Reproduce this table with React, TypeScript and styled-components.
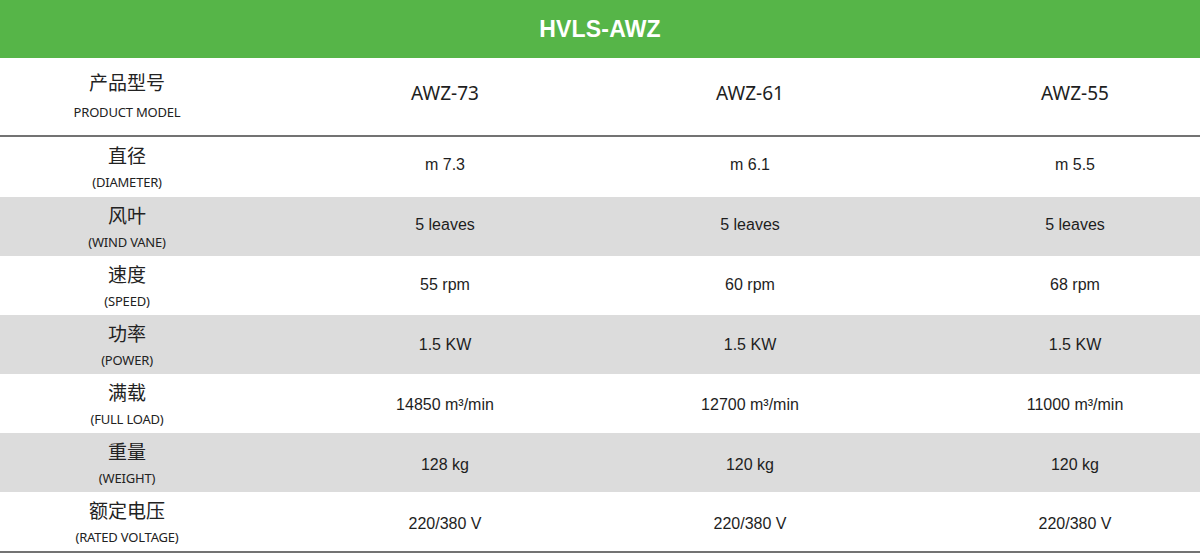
import React from "react";
import styled, { createGlobalStyle } from "styled-components";

const Global = createGlobalStyle`
  html, body { margin: 0; padding: 0; background: #fff; }
  body { width: 1200px; height: 553px; overflow: hidden; }
`;

const Wrap = styled.div`
  width: 1200px;
  display: flex;
  flex-direction: column;
`;

const Title = styled.div`
  height: 58px;
  background: #56b548;
  display: flex;
  align-items: center;
  justify-content: center;
  color: #fff;
  font-family: "Liberation Sans", Arial, sans-serif;
  font-weight: bold;
  font-size: 23px;
  letter-spacing: 0.2px;
`;

const Row = styled.div<{ $alt?: boolean; $h: number; $border?: boolean }>`
  display: grid;
  grid-template-columns: 254px 382px 228px 336px;
  height: ${(p) => p.$h}px;
  background: ${(p) => (p.$alt ? "#dcdcdc" : "#fff")};
  border-bottom: ${(p) => (p.$border ? "2px solid #737373" : "none")};
  box-sizing: content-box;
`;

const Label = styled.div<{ $top: number; $gap: number }>`
  display: flex;
  flex-direction: column;
  align-items: center;
  padding-top: ${(p) => p.$top}px;
  gap: ${(p) => p.$gap}px;
`;

const Zh = styled.div`
  font-family: "Noto Sans CJK SC", "Noto Sans", sans-serif;
  font-size: 19px;
  line-height: 24px;
  color: #222;
`;

const En = styled.div`
  font-family: "Noto Sans", "Liberation Sans", sans-serif;
  font-size: 13px;
  line-height: 15px;
  color: #222;
  letter-spacing: -0.2px;
`;

const Value = styled.div<{ $shift?: number; $model?: boolean; $nudge?: number }>`
  display: flex;
  align-items: center;
  justify-content: center;
  padding-left: ${(p) => p.$shift ?? 0}px;
  padding-top: ${(p) => (p.$nudge ?? 0) * 2}px;
  padding-bottom: ${(p) => (p.$model ? 8 : 4)}px;
  font-family: ${(p) =>
    p.$model ? '"Noto Sans", "Liberation Sans", sans-serif' : '"Liberation Sans", Arial, sans-serif'};
  font-size: ${(p) => (p.$model ? 19 : 16)}px;
  color: #1e1e1e;
`;

const rows = [
  { zh: "直径", en: "(DIAMETER)", v: ["m 7.3", "m 6.1", "m 5.5"] },
  { zh: "风叶", en: "(WIND VANE)", v: ["5 leaves", "5 leaves", "5 leaves"] },
  { zh: "速度", en: "(SPEED)", v: ["55 rpm", "60 rpm", "68 rpm"] },
  { zh: "功率", en: "(POWER)", v: ["1.5 KW", "1.5 KW", "1.5 KW"] },
  { zh: "满载", en: "(FULL LOAD)", v: ["14850 m³/min", "12700 m³/min", "11000 m³/min"] },
  { zh: "重量", en: "(WEIGHT)", v: ["128 kg", "120 kg", "120 kg"] },
  { zh: "额定电压", en: "(RATED VOLTAGE)", v: ["220/380 V", "220/380 V", "220/380 V"] },
];

const heights = [60, 59, 59, 59, 59, 59, 59];
const nudges = [0, 0, 1, 2, 3, 4, 4];

export default function App() {
  return (
    <>
      <Global />
      <Wrap>
        <Title>HVLS-AWZ</Title>
        <Row $h={77} $border>
          <Label $top={12} $gap={11}>
            <Zh>产品型号</Zh>
            <En>PRODUCT MODEL</En>
          </Label>
          <Value $model>AWZ-73</Value>
          <Value $model>AWZ-61</Value>
          <Value $model $shift={86}>AWZ-55</Value>
        </Row>
        {rows.map((r, i) => (
          <Row key={r.zh} $alt={i % 2 === 1} $h={heights[i]} $border={i === rows.length - 1}>
            <Label $top={6} $gap={8}>
              <Zh>{r.zh}</Zh>
              <En>{r.en}</En>
            </Label>
            {r.v.map((v, j) => (
              <Value key={j} $nudge={nudges[i]} $shift={j === 2 ? 86 : 0}>
                {v}
              </Value>
            ))}
          </Row>
        ))}
      </Wrap>
    </>
  );
}
